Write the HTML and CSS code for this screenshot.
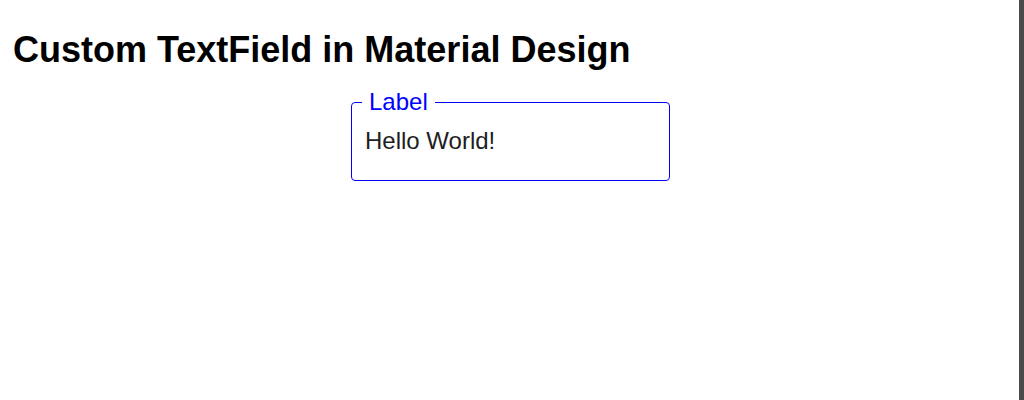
FILE: index.html
```html
<!DOCTYPE html>
<html>
<head>
<meta charset="utf-8">
<link rel="stylesheet" href="styles.css">
</head>
<body>
<div class="page">
  <main class="content">
    <h1 class="title">Custom TextField in Material Design</h1>
    <fieldset class="field">
      <legend class="field-label">Label</legend>
      <input class="field-input" type="text" value="Hello World!">
    </fieldset>
  </main>
  <div class="edge"></div>
</div>
</body>
</html>
```
FILE: styles.css
```css
html, body {
  margin: 0;
  padding: 0;
  background: #fff;
}
.page {
  display: flex;
  height: 400px;
  overflow: hidden;
}
.content {
  flex: 1;
  padding: 0 8px 0 10px;
  font-family: "Liberation Sans", Arial, sans-serif;
}
.edge {
  width: 5px;
  background: #4b4b4b;
}
.title {
  margin: 30px 0 20px 3px;
  font-size: 36px;
  font-weight: bold;
  color: #000;
  line-height: 40px;
}
.field {
  width: 319px;
  box-sizing: border-box;
  height: 91px;
  margin: 0 auto;
  padding: 0 11px 0 11px;
  border: 1px solid #0000ff;
  border-radius: 4px;
}
.field-label {
  padding: 0 7px;
  margin-left: -1px;
  font-size: 24px;
  color: #0000ff;
  line-height: 24px;
}
.field-input {
  display: block;
  width: calc(100% - 2px);
  border: none;
  outline: none;
  padding: 0;
  margin: 13px 0 0 2px;
  font-family: "Liberation Sans", Arial, sans-serif;
  font-size: 24px;
  color: #1e1e1e;
  background: transparent;
}
```
